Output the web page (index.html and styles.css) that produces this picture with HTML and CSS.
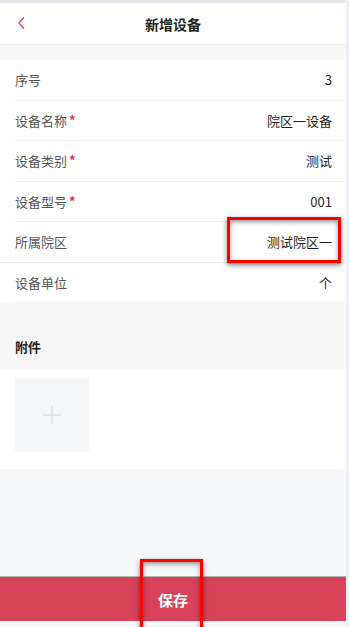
FILE: index.html
```html
<!DOCTYPE html>
<html lang="zh-CN">
<head>
<meta charset="utf-8">
<title>新增设备</title>
<link rel="stylesheet" href="styles.css">
</head>
<body>
<div class="page">
  <div class="topline"></div>
  <header class="nav">
    <svg class="back" width="10" height="14" viewBox="0 0 10 14"><path d="M7 1.5 L2 7 L7 12.5" fill="none" stroke="#d9435a" stroke-width="1.3"/></svg>
    <h1 class="title">新增设备</h1>
  </header>
  <div class="gap"></div>
  <section class="list">
    <div class="row"><span class="label">序号</span><span class="value">3</span></div>
    <div class="row"><span class="label">设备名称<i class="req">*</i></span><span class="value">院区一设备</span></div>
    <div class="row"><span class="label">设备类别<i class="req">*</i></span><span class="value">测试</span></div>
    <div class="row"><span class="label">设备型号<i class="req">*</i></span><span class="value">001</span></div>
    <div class="row row-full"><span class="label">所属院区</span><span class="value">测试院区一</span></div>
    <div class="row"><span class="label">设备单位</span><span class="value">个</span></div>
  </section>
  <div class="section-title">附件</div>
  <section class="attach">
    <div class="upload">
      <svg width="20" height="20" viewBox="0 0 20 20"><path d="M10 1 V19 M1 10 H19" stroke="#dcdee3" stroke-width="1.4"/></svg>
    </div>
  </section>
  <div class="spacer"></div>
  <footer class="savebar">保存</footer>
  <div class="bottom-safe"></div>
</div>
<div class="mark mark-area"></div>
<div class="mark mark-save"></div>
</body>
</html>
```
FILE: styles.css
```css
html, body {
  margin: 0;
  padding: 0;
}
body {
  background: #eef0f4;
  font-family: "Noto Sans CJK SC", "Noto Sans", sans-serif;
  position: relative;
  height: 627px;
  overflow: hidden;
}
.page {
  width: 346px;
  height: 627px;
  display: flex;
  flex-direction: column;
  background: #f7f8fa;
}
.topline {
  height: 3px;
  background: #e3e5ea;
}
.nav {
  height: 41px;
  background: #fff;
  border-bottom: 1px solid #ececec;
  display: flex;
  align-items: center;
  justify-content: center;
  position: relative;
}
.back {
  position: absolute;
  left: 17px;
  top: 13px;
}
.title {
  margin: 0;
  font-size: 14px;
  font-weight: 700;
  color: #222;
}
.gap {
  height: 15px;
  background: #f7f7f8;
}
.list {
  background: #fff;
}
.row {
  height: 39.5px;
  margin-left: 15px;
  padding-right: 14px;
  border-bottom: 1px solid #efefef;
  display: flex;
  align-items: center;
  justify-content: space-between;
  font-size: 13px;
}
.row-full {
  margin-left: 0;
  padding-left: 15px;
}
.label {
  color: #555;
}
.req {
  font-style: normal;
  font-weight: 700;
  color: #e8304a;
  margin-left: 2px;
  position: relative;
  top: -1px;
}
.value {
  color: #1f1f1f;
}
.section-title {
  height: 66px;
  box-sizing: border-box;
  padding: 34px 0 0 15px;
  font-size: 13px;
  font-weight: 700;
  color: #222;
  background: #f7f7f8;
}
.attach {
  background: #fff;
  padding: 9px 15px 17px;
}
.upload {
  width: 74px;
  height: 74px;
  background: #f5f6f8;
  display: flex;
  align-items: center;
  justify-content: center;
}
.spacer {
  flex: 1;
}
.savebar {
  height: 44px;
  border-top: 1px solid #b5b5b5;
  background: #d9435a;
  color: #fff;
  font-size: 15px;
  font-weight: 700;
  display: flex;
  align-items: center;
  justify-content: center;
}
.bottom-safe {
  height: 6px;
  background: #f7f8fa;
}
.mark {
  position: absolute;
  border: 3px solid #ff0000;
  box-sizing: border-box;
  box-shadow: 0 2px 5px rgba(0,0,0,0.5), inset 0 2px 5px rgba(0,0,0,0.4);
}
.mark-area {
  left: 227px;
  top: 217px;
  width: 114px;
  height: 46px;
}
.mark-save {
  left: 140px;
  top: 559px;
  width: 63px;
  height: 72px;
}
```
